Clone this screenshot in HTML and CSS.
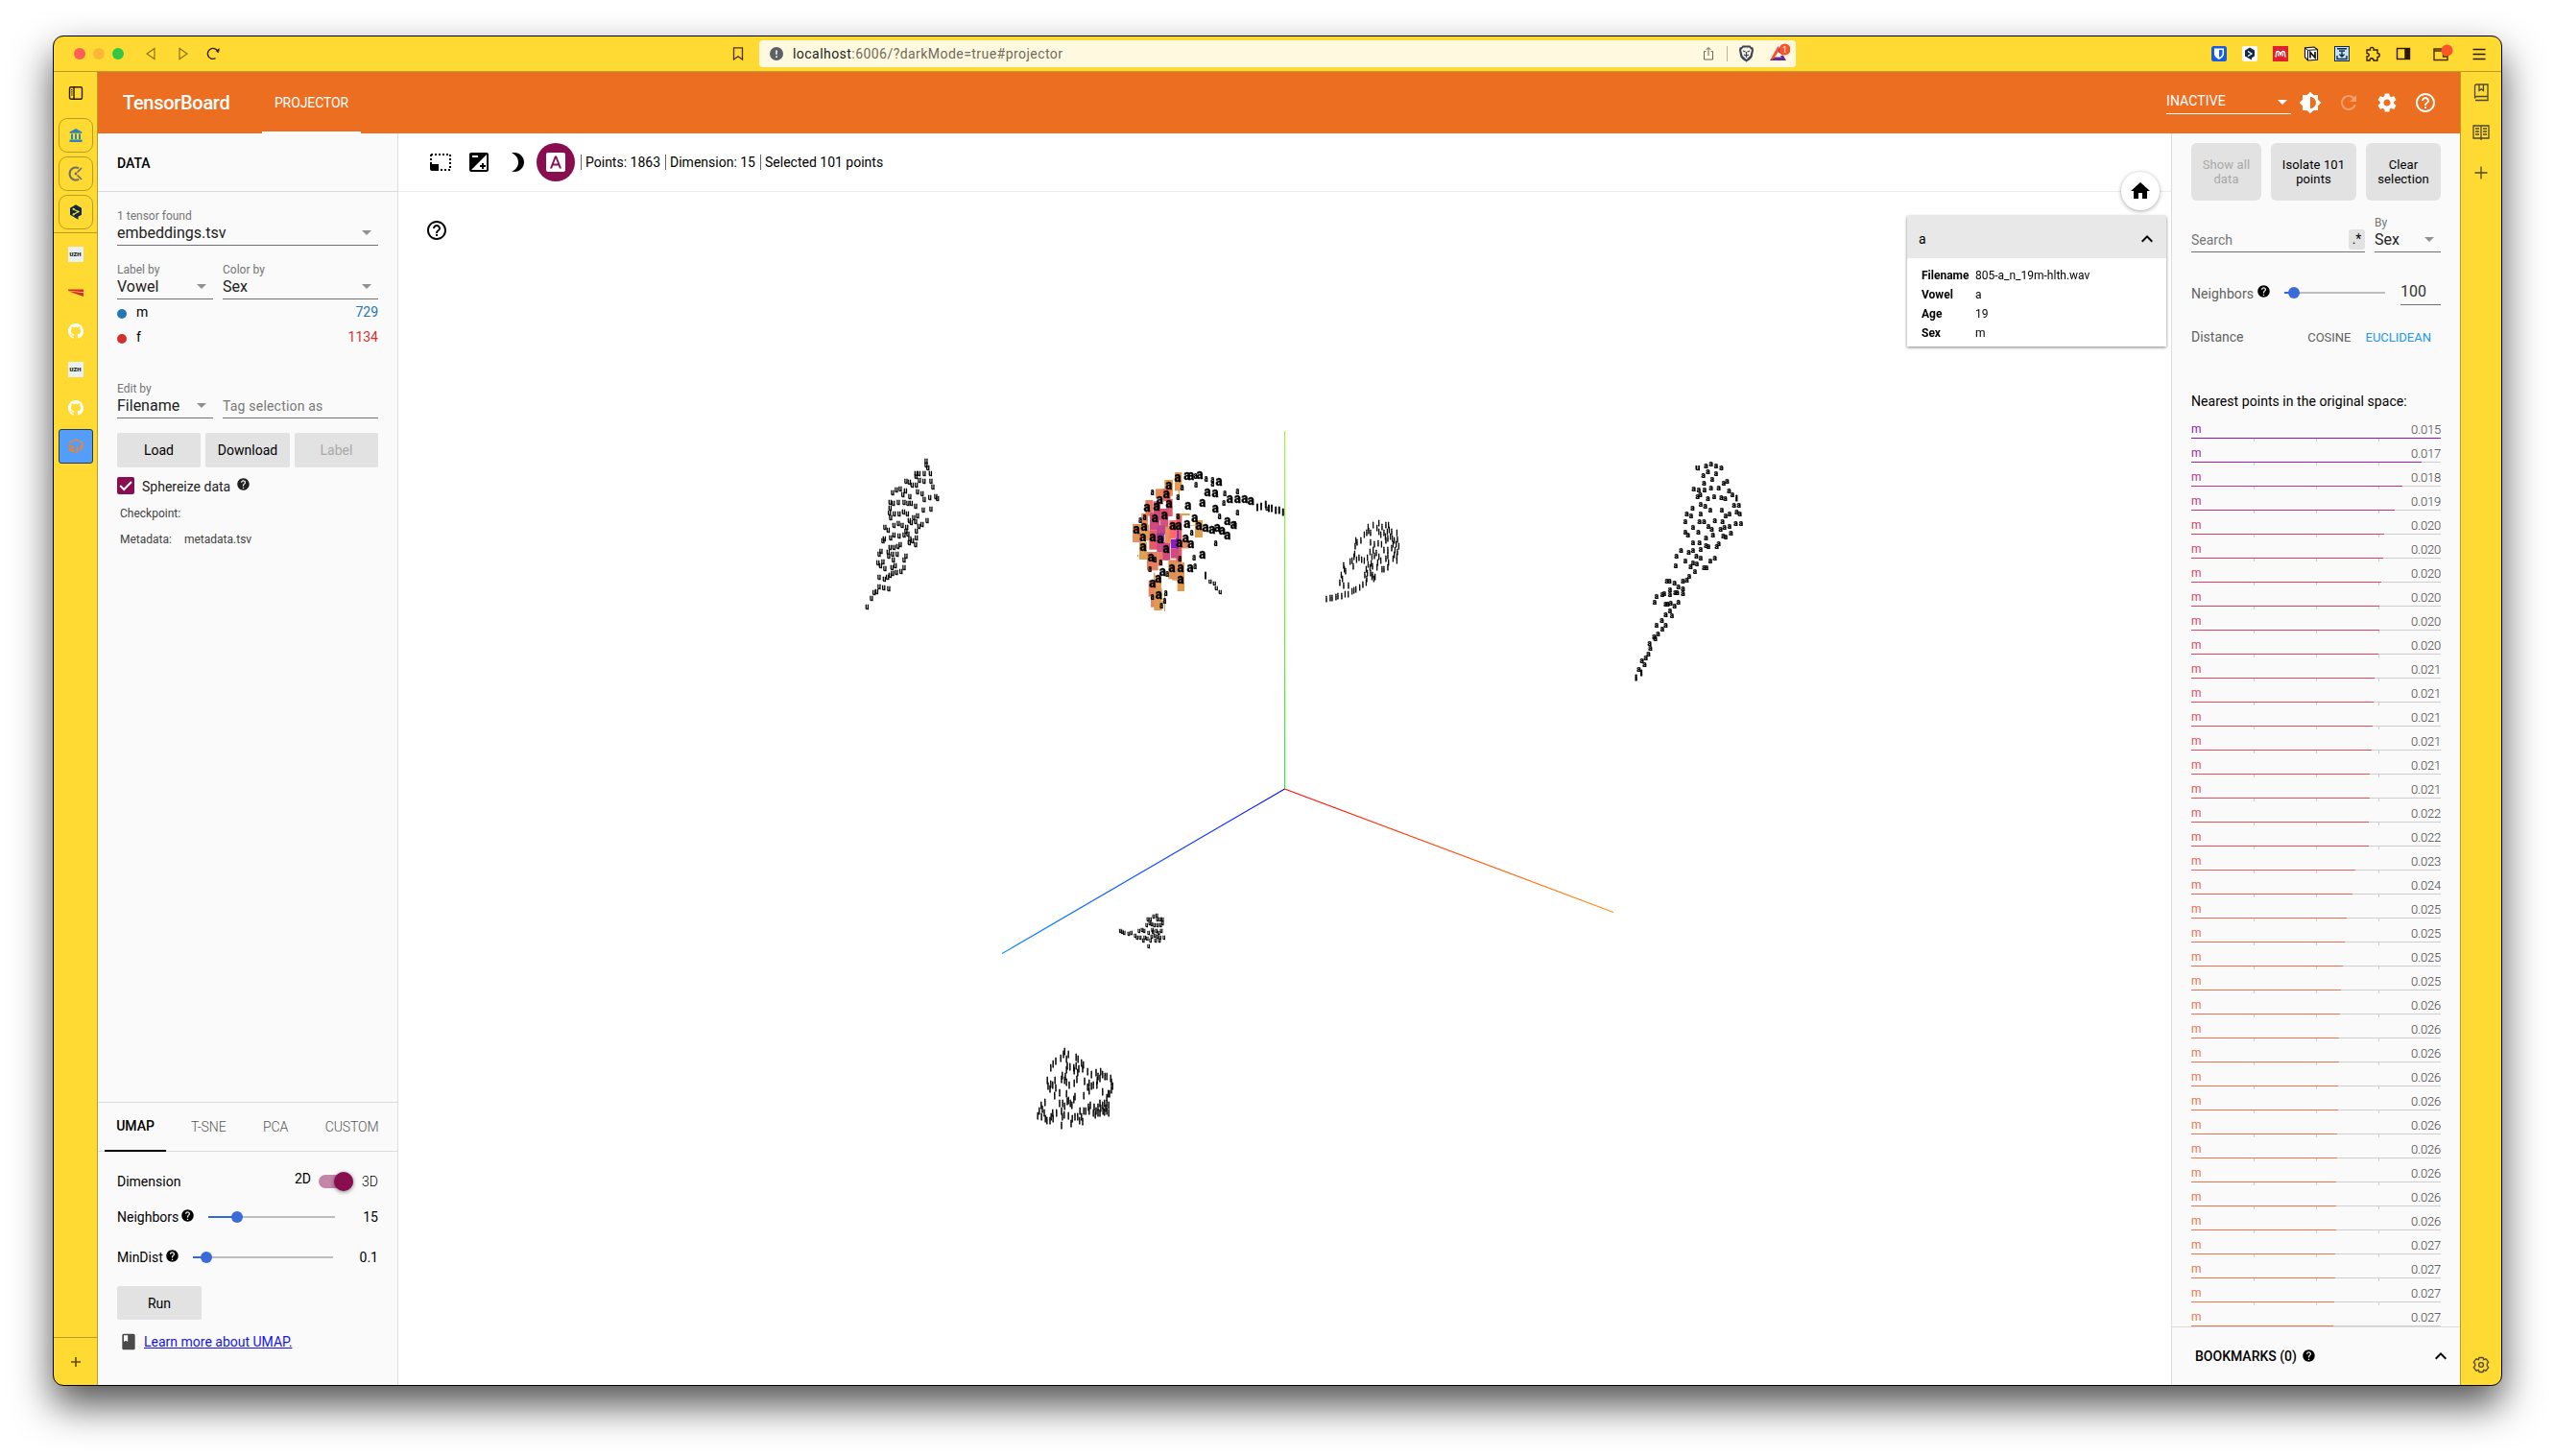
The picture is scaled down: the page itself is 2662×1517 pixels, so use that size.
FILE: index.html
```html
<!DOCTYPE html>
<html lang="en">
<head>
<meta charset="utf-8">
<title>TensorBoard</title>
<link rel="stylesheet" href="styles.css">
</head>
<body>
<svg class="defs" aria-hidden="true">
  <symbol id="help" viewBox="0 0 24 24"><path d="M12 2C6.48 2 2 6.48 2 12s4.48 10 10 10 10-4.48 10-10S17.52 2 12 2zm1 17h-2v-2h2v2zm2.07-7.75l-.9.92C13.45 12.9 13 13.5 13 15h-2v-.5c0-1.1.45-2.1 1.17-2.83l1.24-1.26c.37-.36.59-.86.59-1.41 0-1.1-.9-2-2-2s-2 .9-2 2H8c0-2.21 1.79-4 4-4s4 1.79 4 4c0 .88-.36 1.68-.93 2.25z"/></symbol>
  <symbol id="help-outline" viewBox="0 0 24 24"><path d="M11 18h2v-2h-2v2zm1-16C6.48 2 2 6.48 2 12s4.48 10 10 10 10-4.48 10-10S17.52 2 12 2zm0 18c-4.41 0-8-3.59-8-8s3.59-8 8-8 8 3.59 8 8-3.59 8-8 8zm0-14c-2.21 0-4 1.79-4 4h2c0-1.1.9-2 2-2s2 .9 2 2c0 2-3 1.75-3 5h2c0-2.25 3-2.5 3-5 0-2.21-1.79-4-4-4z"/></symbol>
  <symbol id="expand-less" viewBox="0 0 24 24"><path d="M12 8l-6 6 1.41 1.41L12 10.83l4.59 4.58L18 14z"/></symbol>
  <symbol id="github" viewBox="0 0 16 16"><path d="M8 0C3.58 0 0 3.58 0 8c0 3.54 2.29 6.53 5.47 7.59.4.07.55-.17.55-.38 0-.19-.01-.82-.01-1.49-2.01.37-2.53-.49-2.69-.94-.09-.23-.48-.94-.82-1.13-.28-.15-.68-.52-.01-.53.63-.01 1.08.58 1.23.82.72 1.21 1.87.87 2.33.66.07-.52.28-.87.51-1.07-1.78-.2-3.64-.89-3.64-3.95 0-.87.31-1.59.82-2.15-.08-.2-.36-1.02.08-2.12 0 0 .67-.21 2.2.82.64-.18 1.32-.27 2-.27s1.36.09 2 .27c1.53-1.04 2.2-.82 2.2-.82.44 1.1.16 1.92.08 2.12.51.56.82 1.27.82 2.15 0 3.07-1.87 3.75-3.65 3.95.29.25.54.73.54 1.48 0 1.07-.01 1.93-.01 2.2 0 .21.15.46.55.38A8.01 8.01 0 0016 8c0-4.42-3.58-8-8-8z"/></symbol>
  <symbol id="deepl" viewBox="0 0 16 16"><path d="M8 .3l6 3.4v7.1l-3.6 2 .1 2.9-3-1.8L2 10.800V3.700z" fill="#0f2b46"/><path d="M5.600 4.900l4.900 2.600-4.900 3" fill="none" stroke="#ffda33" stroke-width="1.100"/><circle cx="5.600" cy="4.900" r="1.100" fill="#ffda33"/><circle cx="10.500" cy="7.500" r="1.100" fill="#ffda33"/><circle cx="5.600" cy="10.400" r="1.100" fill="#ffda33"/></symbol>
</svg>

<div class="window">
  <div class="titlebar">
    <div class="lights"><i class="red"></i><i class="amber"></i><i class="green"></i></div>
    <div class="nav">
      <svg class="i16 dim" viewBox="0 0 16 16"><path d="M11 2.500v11L3 8z"/></svg>
      <svg class="i16 dim" viewBox="0 0 16 16"><path d="M5 2.500v11L13 8z"/></svg>
      <svg class="i16 strong" viewBox="0 0 16 16"><path d="M10.500 12.700A5.500 5.500 0 1 1 13.300 7"/><path d="M10.500 5.500h4V2z" fill="#2b1a00" stroke="none"/></svg>
    </div>
    <svg class="i16 bookmark" viewBox="0 0 16 16"><path d="M3.500 1.800h9V14L8 10.800 3.500 14z"/></svg>
    <div class="url">
      <svg class="i16" viewBox="0 0 16 16"><circle cx="8" cy="8" r="7" fill="#5d6066"/><path d="M8 4.500v4.300M8 10.200v1.800" stroke="#fff9df" stroke-width="1.600"/></svg>
      <span class="address"><b>localhost</b>:6006/?darkMode=true#projector</span>
      <svg class="i16 share" viewBox="0 0 16 16"><path d="M5.500 5.500H3.500v8.500h9V5.500h-2M8 10V1.500M5.500 4L8 1.500 10.500 4"/></svg>
      <i class="sep"></i>
      <svg class="lion" viewBox="0 0 16 18"><path d="M4 .5h8l1 1.500 2 .5.500 3-1.500 7-2.500 2.800L8 17.500l-3.500-2.200L2 12.500.500 5.500l.5-3L3 2z" fill="#41444f"/><path d="M5 2.500h6l2.500 2.500-1.500 6-4 4-4-4L2.500 5z" fill="#f4f2e6"/><path d="M4.500 6l2.500 1M11.500 6L9 7M8 7v3.500M5.500 10L8 11l2.500-1M8 11v2" stroke="#41444f" stroke-width="1.200" fill="none"/></svg>
      <svg class="bat" viewBox="0 0 22 20"><path d="M9.500 3L1 18h5l3.500-6z" fill="#f4512f"/><path d="M1 18h17l-3-5H9L6.500 15z" fill="#662d91"/><path d="M9.500 3L18 18l-3-5-5.500-4z" fill="#9e1f63"/><path d="M9.500 9.500l3.500 5H6z" fill="#fff9df"/><circle cx="16.500" cy="6.500" r="6" fill="#fb542b"/><text x="16.500" y="10" class="badge-text">1</text></svg>
    </div>
    <div class="extensions">
      <svg class="i16" viewBox="0 0 16 16"><rect width="16" height="16" rx="2.500" fill="#175ddc"/><path d="M3 2.500h10v5.500c0 3-3 4.800-5 5.800C6 12.800 3 11 3 8z" fill="#fff"/><path d="M8 4h3.500v4c0 1.900-2 3.200-3.500 4z" fill="#175ddc"/></svg>
      <svg class="i16" viewBox="0 0 16 16"><rect width="16" height="16" rx="2" fill="#fff"/><path d="M8 1.500l5 3v6l-3 1.700v2.300L3 10.500v-6z" fill="#0f2b46"/><path d="M6 5.500L10 8l-4 2.500" fill="none" stroke="#fff" stroke-width="1.200"/></svg>
      <svg class="i16" viewBox="0 0 16 16"><rect width="16" height="16" fill="#e01f2f"/><path d="M2.800 11.500Q3.500 10.500 3.500 8T5.300 5.500 8 8.800Q9 5.500 10.700 5.500T12.500 8 13.200 11.500M5.700 7.500v3M10.300 7.500v3" fill="none" stroke="#fff" stroke-width="1.400"/></svg>
      <svg class="i16" viewBox="0 0 16 16"><path d="M1.500 1.800l9.500-.8 3.500 2.500v10.800l-10 .7-3-3.500z" fill="#fff" stroke="#111" stroke-width="1.200"/><path d="M1.500 2L4.500 4.300l10-.6M4.500 4.300V15" stroke="#111" fill="none"/><path d="M7 12.500V6.500l5 5.500V6" stroke="#111" stroke-width="1.700" fill="none"/></svg>
      <svg class="i16" viewBox="0 0 16 16"><rect x=".5" y=".5" width="15" height="15" fill="#c5e2f5" stroke="#0b2d49"/><path d="M3 2.700h10M5 5h6M8 6v4.500M5.500 8.500L8 11l2.500-2.500M3 10v3.500h10V10" fill="none" stroke="#0b2d49" stroke-width="1.400"/></svg>
      <svg class="i16 strong" viewBox="0 0 16 16"><path d="M2 4h3.500c-1-3.500 4.500-3.500 3.500 0H13v3.500c3 0 3 4 0 4V15H9c0-3-4-3-4 0H2v-4c3 0 3-3.500 0-3.500z" stroke-width="1.300"/></svg>
      <svg class="i16 strong" viewBox="0 0 16 16"><rect x="1.500" y="2.500" width="13" height="11" /><path d="M10 3h4v10h-4z" fill="#2b1a00"/></svg>
      <svg class="wallet" viewBox="0 0 22 20"><path d="M16 12v4.500H2V5h9M2 5v2h9M16 9.500h-4.500v3.500H16" fill="none" stroke="#4a2c00" stroke-width="1.400"/><circle cx="15.500" cy="6.500" r="6" fill="#fb542b"/></svg>
      <svg class="i16 strong" viewBox="0 0 16 16"><path d="M1.500 3.500h13M1.500 8.500h13M1.500 13.500h13" stroke-width="1.300"/></svg>
    </div>
  </div>

  <div class="body">
    <nav class="tabs-rail">
      <svg class="i16 strong rail-toggle" viewBox="0 0 16 16"><rect x="1.500" y="1.800" width="13" height="12.500" rx="1.500"/><path d="M6 2v12" /><path d="M3.800 4v7" stroke-dasharray="1.200 1"/></svg>
      <div class="pinned">
        <div class="pin"><svg class="i14" viewBox="0 0 14 14"><path d="M7 0l6.500 3.500v1.300H.5V3.500zM2 5.500h2V11H2zM6 5.500h2V11H6zM10 5.500h2V11h-2zM.5 11.500h13V14H.5z" fill="#2e86b5"/></svg></div>
        <div class="pin"><svg class="i16" viewBox="0 0 16 16"><path d="M11 2.200A6.500 6.500 0 1 0 11 13.800" fill="none" stroke="#6d6d6d" stroke-width="2"/><path d="M9.500 6.500L14 2M9.500 9.500L14 14" stroke="#6d6d6d" stroke-width="1.700"/><circle cx="8" cy="8" r="1.400" fill="#6d6d6d"/></svg></div>
        <div class="pin"><svg class="i16"><use href="#deepl"/></svg></div>
      </div>
      <div class="open">
        <span class="uzh">UZH</span>
        <svg class="i16" viewBox="0 0 16 16"><path d="M0 4.500h16v2.700L0 5.700zM0 6.300l16 2V12z" fill="#d92b2b"/></svg>
        <svg class="i16 gh"><use href="#github"/></svg>
        <span class="uzh">UZH</span>
        <svg class="i16 gh"><use href="#github"/></svg>
        <div class="pin active"><svg class="i16" viewBox="0 0 16 16"><g fill="none" stroke="#f5862a" stroke-width="1.300"><path d="M1 4.500L8 .8l7 3.500v5"/></g><path d="M.5 5.500l6 3v2l-6-2zM1 9.500l5.500 2.300V15L1 12.500zM8.500 9l2-1v6l-2 1.200zM12.500 7l2.500-1.200v5l-2.500 2z" fill="#f0822b"/></svg></div>
      </div>
      <div class="newtab"><svg class="i16 plus" viewBox="0 0 16 16"><path d="M8 3v10M3 8h10" stroke-width="1.600"/></svg></div>
    </nav>

    <main class="page">
      <header class="appbar">
        <h1>TensorBoard</h1>
        <div class="apptab">PROJECTOR</div>
        <div class="appactions">
          <div class="inactive"><span>INACTIVE</span><i class="arrow white"></i></div>
          <svg class="i24" viewBox="0 0 24 24"><path d="M20 15.310L23.310 12 20 8.690V4h-4.690L12 .690 8.690 4H4v4.690L.690 12 4 15.310V20h4.690L12 23.310 15.310 20H20v-4.690zM12 18V6c3.310 0 6 2.690 6 6s-2.690 6-6 6z"/></svg>
          <svg class="i24 faded" viewBox="0 0 24 24"><path d="M17.650 6.350C16.200 4.900 14.210 4 12 4c-4.420 0-7.990 3.580-7.990 8s3.570 8 7.990 8c3.730 0 6.840-2.550 7.730-6h-2.080c-.82 2.330-3.040 4-5.650 4-3.310 0-6-2.690-6-6s2.690-6 6-6c1.660 0 3.140.69 4.220 1.780L13 11h7V4l-2.350 2.350z"/></svg>
          <svg class="i24" viewBox="0 0 24 24"><path d="M19.140 12.940c.04-.3.06-.61.06-.94 0-.32-.02-.64-.07-.94l2.030-1.580c.18-.14.23-.41.12-.61l-1.920-3.320c-.12-.22-.37-.29-.59-.22l-2.390.96c-.5-.38-1.030-.7-1.620-.94l-.36-2.540c-.04-.24-.24-.41-.48-.41h-3.840c-.24 0-.43.17-.47.41l-.36 2.540c-.59.24-1.130.57-1.620.94l-2.390-.96c-.22-.08-.47 0-.59.22L2.740 8.870c-.12.21-.08.47.12.61l2.030 1.580c-.05.3-.09.63-.09.94s.02.64.07.94l-2.030 1.580c-.18.14-.23.41-.12.61l1.920 3.320c.12.22.37.29.59.22l2.390-.96c.5.38 1.030.7 1.620.94l.36 2.540c.05.24.24.41.48.41h3.840c.24 0 .44-.17.47-.41l.36-2.540c.59-.24 1.130-.56 1.620-.94l2.390.96c.22.08.47 0 .59-.22l1.920-3.320c.12-.22.07-.47-.12-.61l-2.010-1.580zM12 15.600c-1.980 0-3.600-1.620-3.600-3.600s1.620-3.600 3.600-3.600 3.600 1.620 3.600 3.600-1.620 3.600-3.600 3.600z"/></svg>
          <svg class="i24"><use href="#help-outline"/></svg>
        </div>
      </header>

      <div class="columns">
        <aside class="left">
          <div class="panel-title">DATA</div>
          <div class="data">
            <div class="field"><label>1 tensor found</label><div class="value">embeddings.tsv<i class="arrow"></i></div></div>
            <div class="pair second">
              <div class="field narrow"><label>Label by</label><div class="value">Vowel<i class="arrow"></i></div></div>
              <div class="field"><label>Color by</label><div class="value">Sex<i class="arrow"></i></div></div>
            </div>
            <div class="legend blue"><i></i><span>m</span><b>729</b></div>
            <div class="legend redish"><i></i><span>f</span><b>1134</b></div>
            <div class="pair third">
              <div class="field narrow"><label>Edit by</label><div class="value">Filename<i class="arrow"></i></div></div>
              <div class="field"><label></label><div class="value placeholder">Tag selection as</div></div>
            </div>
            <div class="buttons"><button>Load</button><button>Download</button><button disabled>Label</button></div>
            <div class="check">
              <svg class="i18" viewBox="0 0 18 18"><rect width="18" height="18" rx="2" fill="#880e4f"/><path d="M3.200 9l4 4L15 5" fill="none" stroke="#fff" stroke-width="2"/></svg>
              <span>Sphereize data</span><svg class="help grey"><use href="#help"/></svg>
            </div>
            <div class="meta"><span>Checkpoint:</span></div>
            <div class="meta"><span>Metadata:</span><span>metadata.tsv</span></div>
          </div>
          <div class="projection">
            <div class="ptabs"><span class="on">UMAP</span><span>T-SNE</span><span>PCA</span><span>CUSTOM</span></div>
            <div class="prow dimension"><span class="grow">Dimension</span><span class="two">2D</span><span class="toggle"><i></i></span><span class="three">3D</span></div>
            <div class="prow neighbors"><span>Neighbors</span><svg class="help"><use href="#help"/></svg><span class="slider"><i></i></span><span class="num">15</span></div>
            <div class="prow mindist"><span>MinDist</span><svg class="help"><use href="#help"/></svg><span class="slider"><i></i></span><span class="num">0.1</span></div>
            <button class="run">Run</button>
            <div class="learn"><svg class="i20" viewBox="0 0 24 24"><path d="M18 2H6c-1.100 0-2 .9-2 2v16c0 1.100.9 2 2 2h12c1.100 0 2-.9 2-2V4c0-1.100-.9-2-2-2zM6 4h5v8l-2.500-1.500L6 12V4z" fill="#4a4a4a"/></svg><a href="#">Learn more about UMAP.</a></div>
          </div>
        </aside>

        <section class="stage">
          <div class="toolbar">
            <svg class="i24" viewBox="0 0 24 24"><path d="M2 4h20v16H9" fill="none" stroke="#000" stroke-width="2" stroke-dasharray="2 2"/><path d="M2 4v10" fill="none" stroke="#000" stroke-width="2" stroke-dasharray="2 2"/><path d="M1 14h9v7H3c-1 0-2-1-2-2z"/></svg>
            <svg class="i24" viewBox="0 0 24 24"><path d="M15 17v2h2v-2h2v-2h-2v-2h-2v2h-2v2h2zm5-15H4c-1.100 0-2 .9-2 2v16c0 1.100.9 2 2 2h16c1.100 0 2-.9 2-2V4c0-1.100-.9-2-2-2zM5 5h6v2H5V5zm15 15H4L20 4v16z"/></svg>
            <svg class="i24" viewBox="0 0 24 24"><path d="M9 2c-1.050 0-2.050.16-3 .46 4.060 1.270 7 5.060 7 9.540 0 4.480-2.940 8.270-7 9.540.95.3 1.950.46 3 .46 5.520 0 10-4.480 10-10S14.520 2 9 2z"/></svg>
            <span class="labels-on"><svg class="i24" viewBox="0 0 24 24"><path d="M9.930 13.500h4.140L12 7.980zM20 2H4c-1.100 0-2 .9-2 2v16c0 1.100.9 2 2 2h16c1.100 0 2-.9 2-2V4c0-1.100-.9-2-2-2zm-4.050 16.500l-1.140-3H9.170l-1.120 3H5.960l5.110-13h1.860l5.110 13h-2.090z"/></svg></span>
            <span class="stat">Points: 1863</span><span class="stat">Dimension: 15</span><span class="stat sel">Selected 101 points</span>
          </div>
          <div class="canvas">
            <svg class="scatter" id="scatter" viewBox="415 200 1847 1243">
              <defs>
                <linearGradient id="gy" gradientUnits="userSpaceOnUse" x1="1338" y1="822" x2="1338" y2="449"><stop offset="0" stop-color="#10ff10"/><stop offset="1" stop-color="#98ff28"/></linearGradient>
                <linearGradient id="gx" gradientUnits="userSpaceOnUse" x1="1338" y1="822" x2="1681" y2="950"><stop offset="0" stop-color="#ff0a0a"/><stop offset="1" stop-color="#ff9410"/></linearGradient>
                <linearGradient id="gz" gradientUnits="userSpaceOnUse" x1="1338" y1="822" x2="1044" y2="993"><stop offset="0" stop-color="#0a0aff"/><stop offset="1" stop-color="#1090ff"/></linearGradient>
              </defs>
              <rect x="1338" y="449" width="1" height="373" fill="url(#gy)"/>
              <line x1="1338.500" y1="822" x2="1681" y2="950.500" stroke="url(#gx)" stroke-width="1.150"/>
              <line x1="1338.500" y1="822" x2="1044" y2="993.500" stroke="url(#gz)" stroke-width="1.150"/>
            </svg>
            <svg class="i24 canvas-help"><use href="#help-outline"/></svg>
            <div class="home"><svg class="i24" viewBox="0 0 24 24"><path d="M10 20v-6h4v6h5v-8h3L12 3 2 12h3v8z"/></svg></div>
            <div class="card">
              <div class="card-head"><span>a</span><svg class="i24"><use href="#expand-less"/></svg></div>
              <dl><dt>Filename</dt><dd>805-a_n_19m-hlth.wav</dd><dt>Vowel</dt><dd>a</dd><dt>Age</dt><dd>19</dd><dt>Sex</dt><dd>m</dd></dl>
            </div>
          </div>
        </section>

        <aside class="right">
          <div class="inspector">
            <div class="actions"><button disabled>Show all data</button><button>Isolate 101 points</button><button>Clear selection</button></div>
            <div class="search-row">
              <div class="search"><span>Search</span><b>.*</b></div>
              <div class="field by"><label>By</label><div class="value">Sex<i class="arrow"></i></div></div>
            </div>
            <div class="nn"><span>Neighbors</span><svg class="help"><use href="#help"/></svg><span class="slider"><i></i></span><span class="count">100</span></div>
            <div class="distance"><span>Distance</span><span class="cos">COSINE</span><span class="euc">EUCLIDEAN</span></div>
            <h2>Nearest points in the original space:</h2>
            <div id="neighbors"></div>
          </div>
          <div class="bookmarks"><span>BOOKMARKS (0)</span><svg class="help"><use href="#help"/></svg><svg class="i24 chev"><use href="#expand-less"/></svg></div>
        </aside>
      </div>
    </main>

    <nav class="side-rail">
      <svg class="i20" viewBox="0 0 20 20"><path d="M4 18.500h13V2H5.500Q3.500 2 3.500 4v12.500q0-2 2-2H17M8 2.500v6l2.200-1.700 2.200 1.700v-6"/></svg>
      <svg class="i20" viewBox="0 0 20 20"><path d="M2 3h8v13H2zM10 3h8v13h-8zM4 6h4M4 9h4M4 12h4M12 6h4M12 9h4M12 12h4M10 16v2"/></svg>
      <svg class="i20" viewBox="0 0 20 20"><path d="M10 3.500v13M3.500 10h13"/></svg>
      <svg class="i20 gear" viewBox="0 0 20 20"><path d="M8 2.500h4l.6 2.200 2.400-.9 2.700 3.400L16.300 9v2l1.400 1.800-2.700 3.400-2.400-.9-.6 2.200H8l-.6-2.200-2.400.9-2.700-3.400L3.700 11V9L2.300 7.200 5 3.800l2.400.9z"/><circle cx="10" cy="10" r="2.400"/></svg>
    </nav>
  </div>
</div>
<script src="app.js"></script>
</body>
</html>
```
FILE: styles.css
```css
* { box-sizing: border-box; }
body { margin: 0; background: #fff; font-family: Roboto, sans-serif; font-size: 14px; color: #000; height: 1517px; overflow: hidden; padding: 37px 55px 0; }
h1, h2, dl, dd { margin: 0; font-weight: 400; }
svg { display: block; flex: none; }
i { display: block; flex: none; }
.defs { display: none; }
.i14 { width: 14px; height: 14px; }
.i16 { width: 16px; height: 16px; }
.i18 { width: 18px; height: 18px; }
.i20 { width: 20px; height: 20px; }
.i24 { width: 24px; height: 24px; }
.help { width: 15px; height: 15px; }

.window { width: 2552px; height: 1407px; border: 1px solid #000; border-radius: 11px; overflow: hidden; background: #ffda33; box-shadow: 0 20px 40px rgba(0, 0, 0, .68); display: flex; flex-direction: column; }
.titlebar { height: 37px; border-bottom: 1px solid #b89d25; display: flex; align-items: center; flex: none; }
.lights { display: flex; gap: 8px; margin-left: 21px; }
.lights i { width: 12px; height: 12px; border-radius: 50%; }
.red { background: #ff5f57; }
.amber { background: #fdb83b; }
.green { background: #33c748; }
.nav { display: flex; gap: 16px; margin-left: 21px; }
.dim { fill: none; stroke: #8d7414; stroke-width: 1.2; }
.strong { fill: none; stroke: #2b1a00; stroke-width: 1.4; }
.plus { fill: none; stroke: #5f4d0a; }
.bookmark { fill: none; stroke: #4a300a; stroke-width: 1.3; margin-left: 531px; }
.url { margin-left: 14px; width: 1080px; height: 28px; border-radius: 4px; background: #fff9df; display: flex; align-items: center; padding: 0 6px 0 10px; color: #6f6b5b; font-size: 14px; }
.address { margin-left: 9px; letter-spacing: .45px; flex: 1; }
.address b { font-weight: 400; color: #222; }
.share { fill: none; stroke: #6b6757; }
.sep { width: 1px; height: 16px; background: #b9b49d; margin: 0 11px 0 11px; }
.lion { width: 17px; height: 18px; }
.bat { width: 22px; height: 20px; margin: 0 0 2px 15px; }
.badge-text { font-size: 9px; fill: #fff; text-anchor: middle; }
.extensions { margin-left: 433px; display: flex; align-items: center; gap: 16px; }
.wallet { width: 22px; height: 20px; margin: 0 3px 0 6px; }

.body { display: flex; flex: 1; min-height: 0; }
.tabs-rail { width: 46px; border-right: 1px solid #b89d25; display: flex; flex-direction: column; align-items: center; flex: none; }
.rail-toggle { margin-top: 14px; }
.pinned { margin-top: 18px; width: 45px; border-bottom: 1px solid #b89d25; padding-bottom: 3px; display: flex; flex-direction: column; align-items: center; gap: 4px; }
.pin { width: 36px; height: 36px; border: 1px solid #b89d25; border-radius: 9px; display: grid; place-items: center; }
.open { margin-top: 14px; display: flex; flex-direction: column; align-items: center; gap: 24px; flex: 1; }
.uzh { width: 16px; height: 16px; background: #eaf1f1; font-size: 6px; font-weight: 900; line-height: 16px; text-align: center; color: #111; }
.gh { fill: #fff; }
.pin.active { background: #539dfb; border-color: #233b5c; border-radius: 3px; margin-top: -10px; }
.newtab { height: 50px; width: 45px; border-top: 1px solid #b89d25; display: grid; place-items: center; }
.side-rail { width: 43px; border-left: 1px solid #b89d25; display: flex; flex-direction: column; align-items: center; padding: 11px 0 11px; gap: 22px; fill: none; stroke: #4c4737; stroke-width: 1.3; flex: none; }
.gear { margin-top: auto; }

.page { flex: 1; min-width: 0; display: flex; flex-direction: column; background: #fff; }
.appbar { height: 64px; background: #ec6e21; color: #fff; display: flex; align-items: center; flex: none; fill: #fff; }
.appbar h1 { font-size: 20px; font-weight: 500; letter-spacing: -.3px; margin-left: 26px; width: 145px; }
.apptab { width: 103px; height: 64px; line-height: 64px; text-align: center; font-size: 14px; border-bottom: 2px solid #fff; letter-spacing: -.1px; }
.appactions { margin-left: auto; display: flex; align-items: center; gap: 16px; padding-right: 24px; }
.inactive { width: 130px; height: 24px; border-bottom: 1px solid #fff; display: flex; align-items: center; justify-content: space-between; padding: 0 4px 4px 0; margin-right: -8px; font-size: 14px; }
.inactive span { line-height: 20px; letter-spacing: .1px; }
.faded { opacity: .35; }
.arrow { width: 0; height: 0; border: 5px solid transparent; border-top-color: #909090; border-bottom: 0; }
.arrow.white { border-top-color: #fff; margin-top: 3px; }

.columns { display: flex; flex: 1; min-height: 0; }
.left { width: 313px; border-right: 1px solid #dcdcdc; background: #fafafa; display: flex; flex-direction: column; flex: none; }
.panel-title { height: 61px; line-height: 62px; padding-left: 20px; font-weight: 500; border-bottom: 1px solid #dcdcdc; }
.data { padding: 17px 20px 0; flex: 1; }
.field { flex: 1; min-width: 0; }
.field label { display: block; height: 14px; line-height: 16px; font-size: 12px; color: #757575; }
.field .value { height: 25px; line-height: 22px; font-size: 16px; color: #212121; border-bottom: 1px solid #707070; display: flex; align-items: center; justify-content: space-between; padding: 0 7px 1px 0; }
.field .placeholder { color: #777; font-size: 14px; letter-spacing: .2px; }
.pair { display: flex; gap: 10px; }
.pair .narrow { flex: 0 0 100px; }
.second { margin-top: 17px; }
.third { margin-top: 32px; }
.legend { height: 26px; display: flex; align-items: center; line-height: 22px; padding-bottom: 2px; }
.legend i { width: 10px; height: 10px; border-radius: 50%; margin: 4px 10px 0 0; background: currentColor; }
.legend span { color: #000; flex: 1; }
.legend b { font-weight: 400; }
.legend.blue { color: #2577b5; margin-top: 1px; }
.legend.redish { color: #d32f2f; }
button { font: 400 14px/16px Roboto, sans-serif; background: #e2e2e2; border: 0; border-radius: 2px; color: #000; padding: 0; }
button:disabled { color: #a9a9a9; }
.buttons { display: grid; grid-template-columns: 87px 88px 87px; gap: 5px; height: 36px; margin-top: 15px; }
.check { margin-top: 10px; height: 18px; display: flex; align-items: center; color: #212121; }
.check span { margin: 1px 6px 0 8px; letter-spacing: 0; }
.check .help { margin-top: -3px; }
.grey { fill: #212121; }
.meta { height: 27px; line-height: 27px; font-size: 12px; color: #424242; padding-left: 3px; display: flex; gap: 13px; }
.check + .meta { margin-top: 7px; }

.projection { height: 295px; border-top: 1px solid #dcdcdc; flex: none; }
.ptabs { height: 51px; border-bottom: 1px solid #dcdcdc; display: flex; font-size: 14px; letter-spacing: -.1px; font-weight: 300; color: #555; line-height: 51px; padding-left: 7px; }
.ptabs span { height: 51px; margin-left: 38.5px; }
.ptabs .on { width: 64px; margin: 0; margin-right: -12.5px; text-align: center; font-weight: 500; letter-spacing: 0; color: #000; border-bottom: 2px solid #000; line-height: 49px; }
.prow { display: flex; align-items: center; padding: 0 20px; }
.dimension { height: 40px; margin-top: 11px; }
.grow { flex: 1; }
.two { margin: -6px 8px 0 0; }
.three { font-weight: 300; width: 17px; }
.toggle { width: 36px; height: 14px; border-radius: 7px; background: #c386a7; margin-right: 9px; }
.toggle i { width: 20px; height: 20px; border-radius: 50%; background: #880e4f; margin: -3px 0 0 16px; box-shadow: 0 1px 4px rgba(0, 0, 0, .5); }
.neighbors { height: 34px; }
.mindist { height: 50px; }
.prow .help { margin: -3px 0 0 2px; }
.num { flex: 1; text-align: right; }
.slider { height: 2px; background: linear-gradient(90deg, #3367d6 30px, #bdbdbd 30px); }
.slider i { width: 12px; height: 12px; border-radius: 50%; background: #3b6bd9; margin: -5px 0 0 24px; }
.neighbors .slider { width: 132px; margin-left: 14px; }
.mindist .slider { width: 146px; margin-left: 14px; background: linear-gradient(90deg, #3367d6 14px, #bdbdbd 14px); }
.mindist .slider i { margin-left: 8px; }
.run { display: block; margin: 5px 0 0 20px; width: 88px; height: 35px; }
.learn { display: flex; align-items: center; margin: 12px 0 0 22px; height: 22px; }
.learn a { color: #1414e8; margin-left: 6px; }

.stage { flex: 1; min-width: 0; display: flex; flex-direction: column; }
.toolbar { height: 61px; border-bottom: 1px solid #ececec; display: flex; align-items: center; padding-left: 32px; flex: none; }
.toolbar > svg { margin-right: 16px; }
.labels-on { width: 40px; height: 40px; border-radius: 50%; background: #880e4f; fill: #fff; display: grid; place-items: center; margin: 0 6px 0 -8px; }
.stat { height: 16px; line-height: 16px; border-left: 1px solid #666; padding: 0 5px 0 4px; }
.canvas { flex: 1; position: relative; }
.scatter { position: absolute; inset: 0; width: 1847px; height: 1243px; will-change: transform; }
.scatter text { font-family: Roboto, sans-serif; font-weight: 900; text-anchor: middle; stroke: #000; stroke-width: .25px; }
.scatter text.thin { stroke-width: .9px; }
.canvas-help { position: absolute; left: 28px; top: 28px; }
.home { position: absolute; right: 12px; top: -21px; width: 40px; height: 40px; border-radius: 50%; background: #fff; display: grid; place-items: center; box-shadow: 0 1px 4px rgba(0, 0, 0, .35); }
.card { position: absolute; right: 5px; top: 25px; width: 270px; height: 136px; background: #fff; box-shadow: 0 1px 3px rgba(0, 0, 0, .5); font-size: 12px; }
.card-head { height: 44px; background: #e8e8e8; display: flex; align-items: center; justify-content: space-between; padding: 3px 8px 0 12px; font-size: 14px; }
.card dl { display: grid; grid-template-columns: 56px 1fr; line-height: 20px; padding: 8px 15px; }
.card dt { font-weight: 700; }

.right { width: 301px; border-left: 1px solid #dcdcdc; background: #fafafa; display: flex; flex-direction: column; flex: none; }
.inspector { padding: 10px 20px 0; flex: 1; min-height: 0; overflow: hidden; }
.actions { display: grid; grid-template-columns: 73px 89px 78px; gap: 10px; height: 60px; margin-right: -4px; }
.actions button { font-size: 13px; line-height: 15px; border-radius: 6px; padding: 0 8px; letter-spacing: .1px; }
.search-row { display: flex; gap: 10px; align-items: flex-end; margin-top: 15px; }
.search { width: 181px; height: 26px; border-bottom: 1px solid #707070; display: flex; justify-content: space-between; color: #757575; line-height: 26px; }
.search b { width: 17px; height: 21px; line-height: 20px; margin-top: 2px; background: #e2e2e2; border-radius: 3px; color: #000; font-weight: 400; text-align: center; }
.nn { display: flex; align-items: center; height: 40px; margin-top: 22px; color: #616161; }
.nn span:first-child { letter-spacing: .1px; padding-top: 1px; }
.nn .help { margin: -3px 0 0 3px; fill: #000; }
.nn .slider { width: 105px; margin-left: 14px; background: linear-gradient(90deg, #3367d6 10px, #bdbdbd 10px); }
.nn .slider i { margin-left: 4px; }
.count { width: 42px; margin-left: 16px; height: 25px; line-height: 22px; color: #333; font-size: 16px; border-bottom: 1px solid #707070; }
.distance { display: flex; height: 24px; line-height: 25px; margin-top: 14px; color: #616161; }
.distance span + span { font-size: 13px; }
.cos { margin-left: auto; }
.distance .euc { color: #2196f3; margin: 0 10px 0 15px; }
.inspector h2 { font-size: 14px; line-height: 20px; margin-top: 45px; white-space: nowrap; letter-spacing: .05px; }
#neighbors { margin-top: 4px; }
.nb { height: 25px; font-size: 12px; }
.nb div { display: flex; justify-content: space-between; height: 24px; line-height: 31px; }
.nb div b { font-weight: 300; font-size: 13px; color: #444; letter-spacing: -.2px; }
.bar { height: 1px; background: #cecece; }
.bar i { height: 1px; }
.ticks { height: 3px; margin-bottom: -3px; display: grid; grid-template-columns: 65px 65px 65px; }
.ticks s { border-right: 1px solid #cecece; margin-right: -1px; }
.bookmarks { height: 61px; border-top: 1px solid #dcdcdc; display: flex; align-items: center; padding: 0 8px 0 24px; font-weight: 500; flex: none; }
.bookmarks .help { margin: -1px 0 0 5px; }
.chev { margin-left: auto; }
```
FILE: app.js
```js
const NS = 'http://www.w3.org/2000/svg';
const scatter = document.getElementById('scatter');

// Each cluster: origin on the page, glyph, font size, horizontal squeeze, and points in thirds of a pixel.
const clusters = [
  { x: 860, y: 440, g: 'u', size: 9, sx: 0.75, pts: '315,122 315,133 320,142 283,160 292,162 309,160 328,162 283,170 252,184 262,188 271,196 294,182 308,186 330,184 336,202 210,222 222,212 234,208 250,215 242,228 264,232 288,218 302,224 284,198 326,236 345,232 350,238 309,243 202,252 212,254 228,250 246,250 258,254 268,254 282,262 202,270 200,285 204,298 215,288 230,288 244,280 256,288 306,274 330,272 276,298 288,294 282,310 318,308 302,320 292,326 186,330 196,338 214,322 228,318 240,324 262,308 268,314 254,330 252,340 284,342 184,366 180,370 204,362 214,352 230,356 246,352 258,350 264,366 272,372 284,362 282,382 202,392 214,392 226,388 234,382 262,376 174,404 168,414 180,436 164,440 172,450 196,408 210,412 224,412 212,430 218,450 198,420 246,430 252,418 246,454 186,458 208,456 236,466 222,470 168,484 184,490 194,484 202,480 210,474 168,516 198,520 182,518 152,532 160,530 144,552 130,577' },
  { x: 1340, y: 430, g: 'a', size: 9, sx: 0.9, pts: '1312,166 1328,160 1344,168 1360,174 1304,198 1344,190 1318,184 1306,222 1332,210 1378,214 1368,222 1274,238 1290,242 1308,242 1328,236 1352,236 1384,244 1395,258 1294,258 1286,262 1318,270 1338,262 1360,266 1372,270 1296,288 1310,294 1326,304 1270,300 1362,306 1400,290 1415,290 1408,310 1418,318 1386,316 1374,324 1252,318 1266,322 1296,318 1248,340 1292,340 1306,340 1340,338 1364,342 1405,346 1422,347 1272,358 1320,356 1330,364 1358,364 1370,360 1386,356 1248,374 1256,382 1288,374 1334,382 1366,386 1374,388 1390,378 1312,392 1272,408 1292,408 1320,418 1312,416 1352,410 1346,420 1296,428 1234,430 1258,438 1272,430 1220,450 1282,448 1296,456 1248,464 1340,456 1326,464 1218,478 1272,470 1264,482 1284,474 1306,484 1314,484 1278,496 1260,512 1190,526 1198,526 1214,532 1240,526 1252,524 1226,545 1240,550 1240,566 1200,555 1216,562 1222,562 1182,566 1176,570 1158,576 1200,568 1152,594 1186,600 1192,600 1202,596 1214,604 1226,594 1186,632 1206,634 1200,620 1174,650 1158,666 1186,664 1176,676 1150,700 1162,692 1154,706 1136,722 1138,738 1132,756 1124,766 1112,776 1120,788 1102,802' },
  { x: 1340, y: 430, g: 'u', size: 9, sx: 1, pts: '1286,174' },
  { x: 1340, y: 430, g: 'i', size: 8, sx: 1, pts: '1110,812 1094,828 1408,266' },
  { x: 1340, y: 430, g: 'i', size: 8, sx: 0.6, pts: '126,582 138,580 144,578 156,576 162,574 174,572 184,568 194,566 206,558 212,556 218,552 230,546 240,538 250,530 252,520 195,540 180,540 168,530 176,520 172,508 186,494 180,476 182,488 200,466 210,480 206,462 212,450 220,460 228,452 236,460 244,462 254,454 216,418 222,406 218,398 214,440 234,400 244,380 252,376 258,370 264,374 256,356 272,352 284,360 290,346 300,358 296,380 290,372 306,376 312,350 320,352 316,372 322,366 330,372 326,386 332,392 318,392 312,400 310,386 346,376 348,396 338,400 344,412 352,416 334,412 330,424 340,428 348,434 338,444 346,450 334,456 346,462 318,430 306,430 298,410 288,408 276,410 264,404 272,430 262,434 282,438 268,450 276,446 290,450 318,446 312,456 320,468 296,462 286,468 266,470 256,474 262,484 270,480 284,482 300,488 306,490 318,484 264,500 270,508 254,500 246,506 250,490 278,512 274,520 268,514' },
  { x: 1000, y: 920, g: 'u', size: 6.5, sx: 0.8, pts: '502,152 508,154 514,156 528,160 536,158 548,166 554,172 560,150 564,172 570,148 574,180 576,152 584,132 588,116 590,156 594,128 596,114 600,130 604,154 606,106 608,134 612,180 616,104 618,116 618,132 622,158 624,182 626,114 628,132 630,150 634,128 634,114 638,172 610,166 618,168 600,170 586,176 578,172 596,180 590,198 602,148 614,150 626,172' },
  { x: 1000, y: 920, g: 'i', size: 9, sx: 0.6, pts: '328,526 324,536 340,536 316,548 334,552 364,544 370,550 300,558 292,566 284,578 336,572 344,574 334,584 356,578 364,572 372,582 380,564 386,570 384,582 358,588 368,592 400,590 412,600 320,602 330,606 318,614 328,618 298,616 274,618 284,630 290,632 276,636 282,644 300,642 342,632 334,624 358,626 366,614 390,620 404,626 400,638 412,634 404,650 418,632 426,594 432,604 440,590 446,600 454,604 460,606 438,610 430,616 428,632 472,612 474,624 478,634 474,648 464,658 460,670 468,660 446,652 296,666 312,656 334,658 388,666 360,668 356,676 340,680 346,688 336,684 328,698 312,688 322,690 350,694 266,686 254,694 258,706 248,714 244,728 264,718 256,730 268,736 272,744 286,730 282,744 290,720 302,720 292,738 318,714 326,726 320,732 318,758 340,728 352,738 348,752 360,732 368,730 376,712 380,732 374,742 384,746 388,712 394,714 402,702 408,696 404,714 420,702 418,718 426,712 424,724 432,702 432,718 438,690 440,704 438,720 446,696 452,690 448,712 456,704 460,690 466,694 466,720 460,714 452,716' },
  { x: 860, y: 440, g: 'i', size: 9, sx: 0.8, pts: '1350,265 1362,262 1376,258 1386,268 1395,270 1408,274 1418,276 1430,282 1188,478' },
  { x: 860, y: 440, g: 'u', size: 8, sx: 0.8, pts: '1202,496 1216,502 1222,518 1234,530 1380,268' }
];

// Highlighted labels of the selected points: x, y, width, height, colour.
const boxes = [
  [1060,180,26,50,'#e0994f'],[1092,156,22,58,'#e39a55'],[1103,210,4,28,'#e39a55'],[1032,208,30,30,'#e68a58'],[1055,207,24,40,'#e96a60'],
  [981,375,24,54,'#e2a055'],[988,284,20,50,'#e68c5c'],[1000,243,24,50,'#e67f60'],[960,318,28,57,'#e6925c'],[984,320,28,50,'#e2a055'],
  [1025,247,22,60,'#cf4a78'],[1065,240,20,55,'#e4596a'],[1046,270,26,58,'#d9507a'],[1014,283,30,55,'#d04a7c'],[1012,338,26,60,'#e45a66'],
  [1036,322,26,28,'#c04590'],[1036,347,24,26,'#9a30a8'],[1036,373,30,32,'#c8488a'],[1060,375,18,56,'#d04a80'],[1040,395,36,36,'#d04a80'],
  [1062,326,18,52,'#e6905a'],[1096,290,18,150,'#e05a68'],[1080,365,24,30,'#8a1fc0'],[1080,395,24,30,'#d04a80'],[1096,338,8,28,'#6f20c0'],[1075,306,24,57,'#ff6a6a'],
  [1072,294,24,12,'#ffffff'],[1095,285,44,6,'#e0a050'],[1132,322,24,2,'#e0a050'],[1155,306,24,54,'#dfa050'],[1114,368,23,26,'#e68860'],
  [1005,405,35,58,'#e57f60'],[1040,405,14,44,'#e57f60'],[1072,430,28,60,'#e08f55'],[1084,462,38,32,'#e0905a'],[1100,438,22,54,'#e09555'],[1100,475,22,53,'#e0994f'],
  [1026,470,4,34,'#e0994f'],[1034,484,16,40,'#e39a55'],[1010,495,25,50,'#e68560'],[1017,540,20,38,'#e68560'],[1027,520,25,68,'#e0994f'],[1059,535,3,56,'#e0994f'],[975,414,3,6,'#e0994f']
];
const bigA = '1101,174 1073,200 1066,227 1045,243 1074,256 1035,266 1005,268 1030,300 1060,292 972,338 996,328 992,360 993,392 1023,362 1047,368 1065,397 1085,326 1104,326 1130,319 1154,300 1167,324 1188,330 1208,338 1225,332 1240,340 1256,355 1256,310 1276,322 1219,270 1178,252 1133,262 1194,220 1218,222 1264,240 1288,240 1310,240 1330,246 1230,186 1170,166 1142,170 1130,168 1178,415 1140,456 1083,456 1110,456 1110,492 1106,380 1126,365 1142,382 1018,424 1054,468 1040,490 1022,506 1042,540';
const smallA = '1022,220 998,298 984,306 1248,222 1288,218 1245,252 1288,284 1210,194 1190,178 1157,168 1115,206 1102,236 1158,195 1152,424 1155,450 1145,345 1030,430 1048,438 1014,460 1068,475 1022,548 1064,535 1060,560 1050,575 1108,426 1210,182 1280,318 1102,294 1232,295 1220,380';

function add(name, attrs, text) {
  const el = document.createElementNS(NS, name);
  for (const k in attrs) el.setAttribute(k, attrs[k]);
  if (text) el.textContent = text;
  scatter.appendChild(el);
}
function glyphs(ox, oy, g, size, sx, pts) {
  for (const p of pts.split(' ')) {
    const [px, py] = p.split(',').map(Number);
    const x = ox + px / 3, y = oy + py / 3 + size * (g === 'i' ? 0.36 : 0.27);
    add('text', { transform: `translate(${x.toFixed(1)} ${y.toFixed(1)}) scale(${sx} 1)`, 'font-size': size, class: g === 'i' ? 'thin' : 'wide' }, g);
  }
}
for (const [x, y, w, h, fill] of boxes) {
  add('rect', { x: 860 + x / 3, y: 440 + y / 3, width: w / 3, height: h / 3, fill });
}
glyphs(860, 440, 'a', 10, 0.7, smallA);
glyphs(860, 440, 'a', 14, 0.95, bigA);
for (const c of clusters) glyphs(c.x, c.y, c.g, c.size, c.sx, c.pts);

// Nearest neighbours: distance and bar length (px of 260).
const neighbors = [
  ['0.015',260],['0.017',240],['0.018',220],['0.019',212],['0.020',201],['0.020',200],['0.020',198],['0.020',196],['0.020',196],['0.020',195],
  ['0.021',191],['0.021',190],['0.021',189],['0.021',188],['0.021',186],['0.021',186],['0.022',185],['0.022',185],['0.023',171],['0.024',168],
  ['0.025',162],['0.025',160],['0.025',158],['0.025',156],['0.026',155],['0.026',154],['0.026',154],['0.026',153],['0.026',153],['0.026',152],
  ['0.026',152],['0.026',151],['0.026',151],['0.026',151],['0.027',150],['0.027',150],['0.027',149],['0.027',148]
];
const stops = [[148,[232,118,76]],[157,[234,112,80]],[171,[232,96,88]],[185,[230,80,88]],[196,[216,68,98]],[201,[208,62,102]],[212,[196,52,122]],[220,[186,50,138]],[240,[156,36,164]],[260,[134,22,184]]];
function colour(v) {
  let i = 1;
  while (i < stops.length - 1 && stops[i][0] < v) i++;
  const [a, ca] = stops[i - 1], [b, cb] = stops[i];
  const t = (v - a) / (b - a);
  return `rgb(${ca.map((c, k) => Math.round(c + (cb[k] - c) * t)).join(',')})`;
}
document.getElementById('neighbors').innerHTML = neighbors.map(([d, w]) =>
  `<div class="nb"><div style="color:${colour(w)}">m<b>${d}</b></div><section class="bar"><i style="width:${w}px;background:${colour(w)}"></i></section><section class="ticks"><s></s><s></s><s></s></section></div>`
).join('');
```
